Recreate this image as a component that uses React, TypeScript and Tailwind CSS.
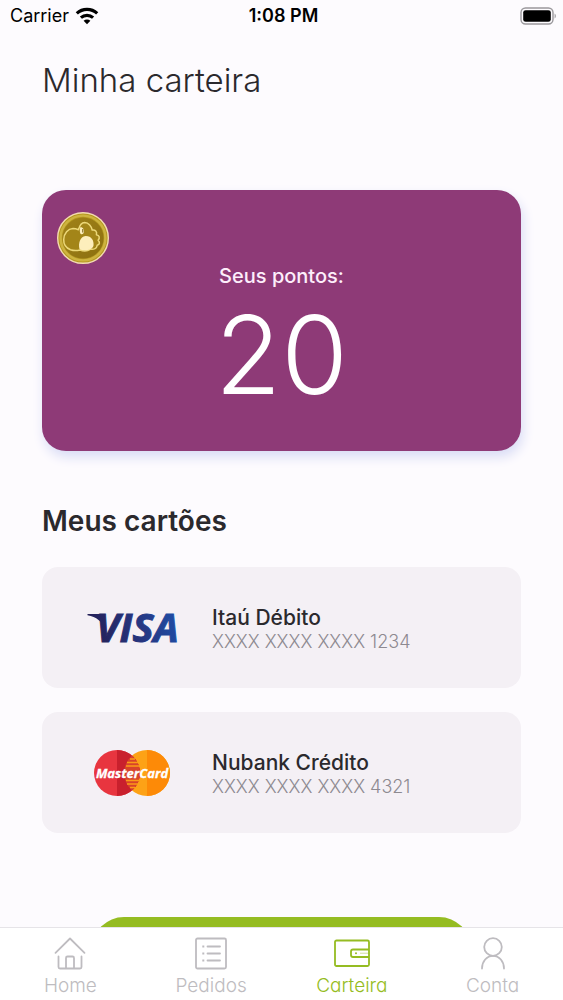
import { useState } from "react"
import type { ReactNode } from "react"

function WifiIcon() {
  return (
    <svg viewBox="0 0 24 18" className="h-[18px] w-6" fill="none" stroke="#000" strokeWidth="3.2">
      <path d="M1.8 6.4C7.6 1 16.4 1 22.2 6.4" />
      <path d="M5.9 10.6c3.5-3.1 8.7-3.1 12.2 0" />
      <path d="M12 17.2l-3.4-3.5c1.9-1.7 4.9-1.7 6.8 0z" fill="#000" stroke="none" />
    </svg>
  )
}

function BatteryIcon() {
  return (
    <svg viewBox="0 0 37 18" className="h-[18px] w-[37px]">
      <rect x="1" y="1" width="32" height="16" rx="4.5" fill="none" stroke="#9a989c" strokeWidth="1.4" />
      <rect x="3.2" y="3.2" width="27.6" height="11.6" rx="2.4" fill="#000" />
      <path d="M34.6 6.5c1.6.7 1.6 4.3 0 5z" fill="#9a989c" />
    </svg>
  )
}

function Coin() {
  return (
    <svg viewBox="0 0 52 52" className="h-[52px] w-[52px]">
      <defs>
        <linearGradient id="coin" x1="0" y1="0" x2="1" y2="1">
          <stop offset="0" stopColor="#a08218" />
          <stop offset="1" stopColor="#8c7010" />
        </linearGradient>
      </defs>
      <circle cx="26" cy="26" r="25.3" fill="#b5981f" stroke="#f3dcb0" strokeWidth="1.4" />
      <circle cx="26" cy="26" r="22.4" fill="none" stroke="#cdb340" strokeWidth="2.4" />
      <circle cx="26" cy="26" r="20.6" fill="url(#coin)" />
      <path
        d="M23 38c-3 .8-6.5.8-9.500-.2C9 36 6.500 32.500 6.700 27.500 7 21 11 16.800 16 16.600c2.500 0 4 .6 5.500 1.200 1-4 2.800-7 6.200-7.200 4 0 6.800 3.700 7.500 7.400 3-.5 5.200 1.500 4.200 4.700 3 .6 3.800 3.200 1.700 5.500 2 1.900 1.800 4.300-.9 5.100-.5 3.200-3.400 4.400-6.600 3.900-3.200 2-7.400 2-10.600.8z"
        fill="#a38518"
        stroke="#ecd878"
        strokeWidth="1.5"
        strokeLinejoin="round"
      />
      <path d="M22.5 37c-1.500-5 .5-12.500 6-13 6-.2 8.500 4.500 8 9.500-.5 4.500-10 6.500-14 3.500z" fill="#fdeebc" />
      <path d="M23.5 15c2.200.3 3.800 2.200 3.500 4.800-.1 1.700-1.300 2.800-2.800 2.500-1.500-.4-1.800-4.600-.7-7.300z" fill="#fdeebc" />
      <path d="M25.8 17v3.5" stroke="#6f5908" strokeWidth="1" />
    </svg>
  )
}

function VisaLogo() {
  return (
    <svg viewBox="0 0 92 32" className="h-8 w-[92px] overflow-visible" role="img" aria-label="Visa">
      <defs>
        <linearGradient id="visa" gradientUnits="userSpaceOnUse" x1="6" y1="28" x2="88" y2="4">
          <stop offset="0" stopColor="#241f55" />
          <stop offset="0.55" stopColor="#26357f" />
          <stop offset="1" stopColor="#1f4ba3" />
        </linearGradient>
      </defs>
      <path d="M1.5 2h12c2 0 3.300.8 3.800 2.800l2 13C16 9 10.500 5 1.500 3.200z" fill="url(#visa)" />
      <text
        x="10"
        y="30"
        fill="url(#visa)"
        stroke="url(#visa)"
        strokeWidth="1"
        className="font-['Open_Sans',sans-serif] text-[40px] font-bold italic"
      >
        VISA
      </text>
    </svg>
  )
}

function MastercardLogo() {
  return (
    <svg viewBox="0 0 76 46" className="h-[46px] w-[76px]" role="img" aria-label="MasterCard">
      <circle cx="53" cy="23" r="23" fill="#fda216" />
      <path d="M53 0a23 23 0 0 1 0 46z" fill="#fd8a07" />
      <circle cx="23" cy="23" r="23" fill="#e8353f" />
      <path d="M23 0a23 23 0 0 1 0 46z" fill="#c9202d" />
      <path d="M38 5.6a23 23 0 0 1 0 34.800a23 23 0 0 1 0-34.800z" fill="#d8432a" />
      <path d="M36 9h5M33 12.5h11M32 16h14M32 30.5h14M33 34h11M36 37.5h5" stroke="#fb9a17" strokeWidth="1.4" />
      <text
        x="38"
        y="28"
        textAnchor="middle"
        fill="#fff"
        stroke="#fff"
        strokeWidth="0.3"
        className="font-['Open_Sans',sans-serif] text-[13px] font-bold italic"
      >
        MasterCard
      </text>
    </svg>
  )
}

function HomeIcon() {
  return (
    <svg viewBox="0 0 32 34" className="h-[34px] w-8" fill="none" stroke="currentColor" strokeWidth="1.8" strokeLinejoin="round" strokeLinecap="round">
      <path d="M1.5 16.8L16 2.5l14.5 14.3" />
      <path d="M4.5 20.5V31q0 1.5 1.5 1.5h20q1.500 0 1.500-1.500V20.5" />
      <path d="M12 32V22q0-1.500 1.500-1.500h5q1.500 0 1.500 1.500v10" />
    </svg>
  )
}

function OrdersIcon() {
  return (
    <svg viewBox="0 0 32 34" className="h-[34px] w-8" fill="none" stroke="currentColor" strokeWidth="1.8">
      <rect x="1" y="2.5" width="30" height="30" rx="1.5" />
      <path d="M12.5 10.5H25M12.5 17.5H25M12.5 24.5H25" strokeLinecap="round" />
      <path d="M7.3 10.5h2M7.3 17.5h2M7.3 24.5h2" />
    </svg>
  )
}

function WalletIcon() {
  return (
    <svg viewBox="0 0 36 34" className="h-[34px] w-9" fill="none" stroke="currentColor" strokeWidth="1.8">
      <rect x="1" y="4.5" width="34" height="25.5" rx="1.5" />
      <path d="M35 13.5H19q-2 0-2 2v3.500q0 2 2 2H35" />
      <path d="M26 17.2h9" strokeWidth="0.8" opacity="0.6" />
      <circle cx="22" cy="17.2" r="1" fill="currentColor" stroke="none" />
    </svg>
  )
}

function AccountIcon() {
  return (
    <svg viewBox="0 0 32 34" className="h-[34px] w-8" fill="none" stroke="currentColor" strokeWidth="1.8" strokeLinecap="round">
      <circle cx="16" cy="11" r="8.8" />
      <path d="M5 32.5c0-7 4.700-12.700 11-12.700S27 25.5 27 32.5" />
    </svg>
  )
}

type PaymentCard = { name: string; number: string; logo: ReactNode }

const cards: PaymentCard[] = [
  { name: "Itaú Débito", number: "XXXX XXXX XXXX 1234", logo: <VisaLogo /> },
  { name: "Nubank Crédito", number: "XXXX XXXX XXXX 4321", logo: <MastercardLogo /> },
]

const tabs = [
  { id: "home", label: "Home", icon: <HomeIcon /> },
  { id: "pedidos", label: "Pedidos", icon: <OrdersIcon /> },
  { id: "carteira", label: "Carteira", icon: <WalletIcon /> },
  { id: "conta", label: "Conta", icon: <AccountIcon /> },
]

export default function App() {
  const [activeTab, setActiveTab] = useState("carteira")

  return (
    <div className="flex h-screen flex-col bg-[#fdfbfe] font-['Inter',sans-serif] text-[#2b292d]">
      {/* Status bar */}
      <div className="grid h-8 shrink-0 grid-cols-3 items-center pr-1.5 pl-2.5 text-lg text-black">
        <div className="flex items-center gap-1.5">
          <span>Carrier</span>
          <WifiIcon />
        </div>
        <span className="text-center font-semibold">1:08 PM</span>
        <div className="flex justify-end">
          <BatteryIcon />
        </div>
      </div>

      {/* Main content */}
      <main className="min-h-0 flex-1 overflow-y-auto px-[42px] pb-8 [scrollbar-width:none]">
        <h1 className="pt-7 text-[33px] leading-10 font-light">Minha carteira</h1>

        <section className="relative mt-[90px] flex h-[261px] flex-col items-center rounded-3xl bg-[#8e3a77] pt-[72px] text-[#fdeefb] shadow-[2px_6px_12px_#d9dcf5]">
          <div className="absolute top-[22px] left-[15px]">
            <Coin />
          </div>
          <p className="text-xl leading-7 font-medium">Seus pontos:</p>
          <p className="text-[108px] leading-[130px] font-light text-white">20</p>
        </section>

        <h2 className="mt-[52px] text-[28px] leading-9 font-semibold">Meus cartões</h2>

        <ul className="mt-7 flex flex-col gap-6">
          {cards.map((card) => (
            <li key={card.number} className="flex h-[121px] items-center rounded-2xl bg-[#f4f0f5] pl-11">
              <div className="flex w-[92px] justify-center">{card.logo}</div>
              <div className="pt-1 pl-[34px]">
                <p className="text-[21px] leading-6 font-medium">{card.name}</p>
                <p className="text-lg leading-6 font-light text-[#8d8990]">{card.number}</p>
              </div>
            </li>
          ))}
        </ul>

        <button type="button" aria-label="Adicionar cartão" className="mx-auto mt-[84px] block h-16 w-[79%] rounded-full bg-[#95bc22]" />
      </main>

      {/* Bottom navigation */}
      <nav className="grid h-[73px] shrink-0 grid-cols-4 border-t border-[#e6e4e8] bg-white">
        {tabs.map((tab) => (
          <button
            key={tab.id}
            type="button"
            onClick={() => setActiveTab(tab.id)}
            className={
              tab.id === activeTab
                ? "flex flex-col items-center pt-2 text-[#95bc22]"
                : "flex flex-col items-center pt-2 text-[#bebcc0]"
            }
          >
            {tab.icon}
            <span className="mt-1 text-[19px] leading-6 font-light [font-feature-settings:'cv11']">{tab.label}</span>
          </button>
        ))}
      </nav>
    </div>
  )
}
